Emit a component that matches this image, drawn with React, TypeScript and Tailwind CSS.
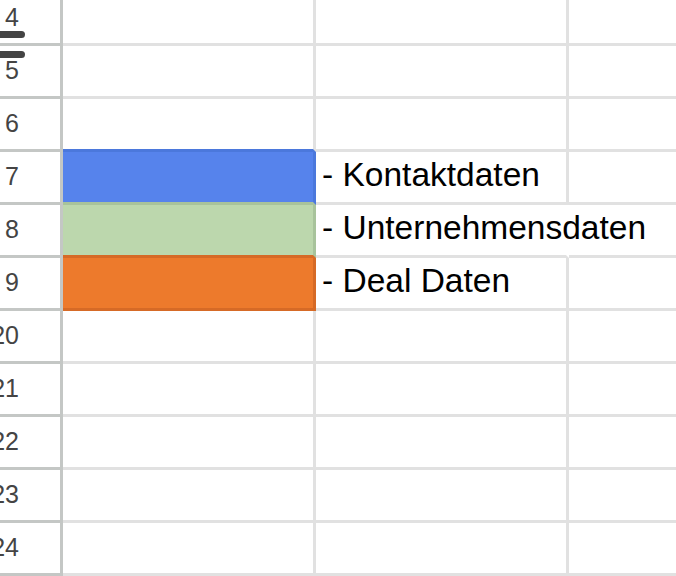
type Row = {
  n: number;
  a: string;
  b: string;
  label?: string;
};

const grid = "border-[#e1e1e1]";

const rows: Row[] = [
  { n: 4, a: grid, b: grid },
  { n: 5, a: grid, b: grid },
  { n: 6, a: "border-r-[#e1e1e1] border-b-[#4b78dc]", b: grid },
  { n: 7, a: "bg-[#5683ec] border-r-[#4b78dc] border-b-[#a8c39b]", b: grid, label: "- Kontaktdaten" },
  { n: 8, a: "bg-[#bcd7ad] border-r-[#a8c39b] border-b-[#d66a26]", b: "border-r-transparent border-b-[#e1e1e1]", label: "- Unternehmensdaten" },
  { n: 9, a: "bg-[#ed7a2c] border-r-[#d66a26] border-b-[#d66a26]", b: grid, label: "- Deal Daten" },
  { n: 20, a: grid, b: grid },
  { n: 21, a: grid, b: grid },
  { n: 22, a: grid, b: grid },
  { n: 23, a: grid, b: grid },
  { n: 24, a: grid, b: grid },
];

export default function App() {
  return (
    <div className="relative w-[676px] h-[576px] overflow-hidden bg-white font-['Liberation_Sans',Arial,sans-serif]">
      <div className="-mt-[7px]">
        {rows.map((r) => (
          <div key={r.n} className="flex h-[53px]">
            {/* row header */}
            <div className="w-[63px] shrink-0 flex items-center justify-end pr-[41px] border-r-[3px] border-b-[3px] border-[#c4c7c5] text-[25px] text-[#444] whitespace-nowrap">
              {r.n}
            </div>
            <div className={`w-[253px] shrink-0 border-r-[3px] border-b-[3px] ${r.a}`} />
            <div className={`relative z-10 w-[253px] shrink-0 flex items-end pl-[6px] pb-[2px] border-r-[3px] border-b-[3px] ${r.b} text-[33.5px] text-black whitespace-nowrap`}>
              {r.label}
            </div>
            <div className="flex-1 border-b-[3px] border-[#e1e1e1]" />
          </div>
        ))}
      </div>
      {/* row resize handle */}
      <div className="absolute left-0 top-[31px] w-[25px] h-[7px] rounded-r-full bg-[#444]" />
      <div className="absolute left-0 top-[51px] w-[25px] h-[7px] rounded-r-full bg-[#444]" />
    </div>
  );
}
